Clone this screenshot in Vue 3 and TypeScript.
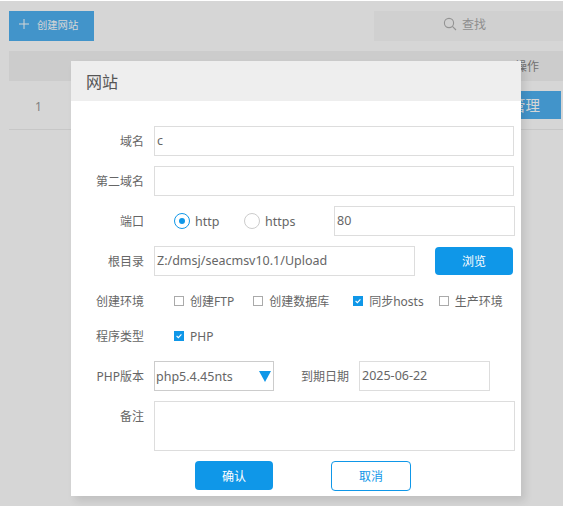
<script setup lang="ts">
const envOptions = [
  { label: '创建FTP', checked: false },
  { label: '创建数据库', checked: false },
  { label: '同步hosts', checked: true },
  { label: '生产环境', checked: false },
]
</script>

<template>
  <div class="page">
    <div class="toolbar">
      <div class="create">
        <svg class="plus" width="12" height="12" viewBox="0 0 12 12"><path d="M6 1v10M1 6h10" stroke="#fff" stroke-width="1" fill="none" /></svg>
        <span>创建网站</span>
      </div>
      <div class="search">
        <svg width="14" height="14" viewBox="0 0 14 14"><circle cx="6" cy="6" r="4.6" stroke="#b0b0b0" stroke-width="1.1" fill="none" /><path d="M9.4 9.4 13 13" stroke="#b0b0b0" stroke-width="1.1" /></svg>
        <span>查找</span>
      </div>
    </div>
    <div class="thead"><span>操作</span></div>
    <div class="trow">
      <span class="num">1</span>
      <span class="manage">管理</span>
    </div>

    <div class="overlay"></div>

    <div class="modal">
      <div class="title">网站</div>
      <div class="body">
        <div class="row">
          <label class="lab">域名</label>
          <div class="input grow">c</div>
        </div>
        <div class="row">
          <label class="lab">第二域名</label>
          <div class="input grow"></div>
        </div>
        <div class="row">
          <label class="lab">端口</label>
          <div class="radios">
            <span class="radio on"><i></i></span><span class="rtext first">http</span>
            <span class="radio"></span><span class="rtext">https</span>
          </div>
          <div class="input port">80</div>
        </div>
        <div class="row">
          <label class="lab">根目录</label>
          <div class="input root">Z:/dmsj/seacmsv10.1/Upload</div>
          <button class="btn browse">浏览</button>
        </div>
        <div class="row check-row env">
          <label class="lab">创建环境</label>
          <div class="checks">
            <span v-for="o in envOptions" :key="o.label" class="check-item">
              <span class="box" :class="{ on: o.checked }">
                <svg v-if="o.checked" width="10" height="10" viewBox="0 0 10 10"><path d="M2 5l2.2 2L8 3" stroke="#fff" stroke-width="1.4" fill="none" /></svg>
              </span>
              <span>{{ o.label }}</span>
            </span>
          </div>
        </div>
        <div class="row check-row type">
          <label class="lab">程序类型</label>
          <div class="checks">
            <span class="check-item">
              <span class="box on">
                <svg width="10" height="10" viewBox="0 0 10 10"><path d="M2 5l2.2 2L8 3" stroke="#fff" stroke-width="1.4" fill="none" /></svg>
              </span>
              <span>PHP</span>
            </span>
          </div>
        </div>
        <div class="row php">
          <label class="lab">PHP版本</label>
          <div class="select">
            <span>php5.4.45nts</span>
            <svg width="12" height="11" viewBox="0 0 12 11"><path d="M0 0h12L6 11z" fill="#0f97e8" /></svg>
          </div>
          <label class="date-lab">到期日期</label>
          <div class="input date">2025-06-22</div>
        </div>
        <div class="row note">
          <label class="lab note-lab">备注</label>
          <div class="input area"></div>
        </div>
        <div class="actions">
          <button class="btn ok">确认</button>
          <button class="btn cancel">取消</button>
        </div>
      </div>
    </div>
  </div>
</template>

<style>
html, body { margin: 0; padding: 0; overflow: hidden; background: #fff; }
</style>

<style scoped>
.page {
  position: relative;
  width: 563px;
  height: 506px;
  overflow: hidden;
  background: #fff;
  font-family: "Noto Sans", "Noto Sans CJK SC", sans-serif;
  font-size: 12.5px;
  color: #666;
  box-sizing: border-box;
  padding: 11px 0 0 9px;
}
.toolbar { display: flex; justify-content: space-between; height: 30px; }
.create {
  width: 85px;
  background: #4fb1f1;
  color: #fff;
  display: flex;
  align-items: center;
  font-size: 10.3px;
  box-sizing: border-box;
  padding: 0 0 4px 9px;
  gap: 7px;
}
.plus { flex: none; }
.search {
  width: 189px;
  background: #f8f8f8;
  color: #aaa;
  display: flex;
  align-items: center;
  box-sizing: border-box;
  padding: 0 0 5px 69px;
  gap: 5px;
  font-size: 12px;
}
.thead {
  margin-top: 10px;
  height: 30px;
  background: #f4f4f4;
  display: flex;
  align-items: center;
  justify-content: flex-end;
  padding-right: 24px;
  font-size: 12px;
  color: #888;
}
.trow {
  height: 49px;
  box-sizing: border-box;
  border-bottom: 1px solid #eee;
  display: flex;
  align-items: center;
  justify-content: space-between;
  padding: 0 2px 0 26px;
}
.num { color: #999; font-size: 12px; padding-top: 2px; }
.manage {
  width: 60px;
  height: 28px;
  line-height: 28px;
  background: #4fb1f1;
  color: #fff;
  text-align: right;
  padding-right: 21px;
  box-sizing: border-box;
  font-size: 14.5px;
  white-space: nowrap;
}
.overlay {
  position: absolute;
  inset: 1px 0 0 0;
  background: rgba(0, 0, 0, 0.16);
}
.modal {
  position: absolute;
  left: 71px;
  top: 61px;
  width: 450px;
  height: 435px;
  background: #fff;
  box-shadow: 4px 5px 8px rgba(0, 0, 0, 0.1);
}
.title {
  height: 40px;
  line-height: 42px;
  background: #eee;
  padding-left: 15px;
  font-size: 16px;
  color: #555;
}
.body {
  padding: 25px 6px 0 0;
  display: flex;
  flex-direction: column;
}
.row {
  display: flex;
  align-items: center;
  height: 30px;
  margin-bottom: 10px;
}
.lab {
  width: 73px;
  flex: none;
  text-align: right;
  margin-right: 10px;
  font-size: 12px;
  color: #666;
}
.input {
  box-sizing: border-box;
  height: 30px;
  line-height: 28px;
  border: 1px solid #ddd;
  padding-left: 2px;
  color: #666;
  background: #fff;
}
.grow { width: 360px; flex: none; }
.radios { display: flex; align-items: center; width: 180px; margin-left: 20px; flex: none; margin-right: -20px; }
.radio {
  width: 14px;
  height: 14px;
  border: 1px solid #ccc;
  border-radius: 50%;
  display: inline-flex;
  align-items: center;
  justify-content: center;
  flex: none;
  box-sizing: content-box;
}
.radio.on { border-color: #0f97e8; }
.radio.on i { width: 6px; height: 6px; border-radius: 50%; background: #0f97e8; display: block; }
.rtext { margin-left: 5px; }
.rtext.first { width: 27px; margin-right: 22px; }
.port { width: 181px; flex: none; }
.root { width: 261px; flex: none; }
.btn {
  font: inherit;
  font-size: 12px;
  box-sizing: border-box;
  border-radius: 4px;
  border: none;
  padding: 0;
  cursor: pointer;
}
.browse { width: 78px; height: 28px; margin-left: 20px; background: #0f97e8; color: #fff; }
.check-row { font-size: 12px; }
.env { height: 30px; margin-bottom: 5px; }
.type { margin-bottom: 10px; }
.checks { display: flex; align-items: center; margin-left: 20px; }
.check-item { display: inline-flex; align-items: center; gap: 6px; color: #666; margin-right: 19px; white-space: nowrap; }
.check-item:nth-child(2) { margin-right: 24px; }
.check-item:nth-child(3) { margin-right: 15px; }
.box {
  box-sizing: border-box;
  width: 10px;
  height: 10px;
  border: 1px solid #aaa;
  display: inline-flex;
  align-items: center;
  justify-content: center;
  flex: none;
}
.box.on { background: #0f97e8; border-color: #0f97e8; }
.select {
  box-sizing: border-box;
  width: 120px;
  height: 30px;
  border: 1px solid #ccc;
  display: flex;
  align-items: center;
  justify-content: space-between;
  padding: 0 1px 0 1px;
  flex: none;
}
.select svg { margin-right: 1px; }
.date-lab { width: 48px; margin-left: 27px; margin-right: 10px; font-size: 12px; white-space: nowrap; flex: none; }
.date { width: 131px; flex: none; padding-left: 2px; }
.note { height: 50px; align-items: flex-start; }
.note-lab { margin-top: 6px; }
.area { width: 361px; height: 50px; flex: none; }
.actions { display: flex; margin-top: 0; padding-left: 124px; gap: 58px; }
.ok { width: 78px; height: 29px; background: #0f97e8; color: #fff; }
.cancel { width: 80px; height: 30px; background: #fff; border: 1px solid #0f97e8; color: #0f97e8; }
</style>
